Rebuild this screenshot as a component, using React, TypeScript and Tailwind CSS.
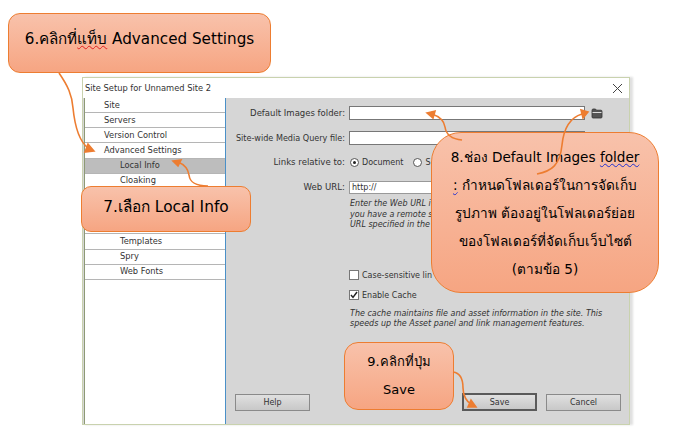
import React from "react";

const sans = "font-['Tahoma','DejaVu_Sans','Noto_Sans_Thai','Noto_Sans',sans-serif]";
const rows: [string, number][] = [
  ["Site", 1], ["Servers", 1], ["Version Control", 1], ["Advanced Settings", 1],
  ["Local Info", 2], ["Cloaking", 2], ["", 2], ["", 2],
  ["", 2], ["Templates", 2], ["Spry", 2], ["Web Fonts", 2],
];

function Callout({ className, children }: { className: string; children: React.ReactNode }) {
  return (
    <div className={"absolute flex flex-col items-center justify-center border border-[#ed7d31] bg-gradient-to-b from-[#f8c2ab] to-[#f6a582] text-black font-['DejaVu_Sans','Noto_Sans',sans-serif] " + className}>
      {children}
    </div>
  );
}

function Btn({ label, primary, className }: { label: string; primary?: boolean; className?: string }) {
  return (
    <div className={"flex w-[75px] items-center justify-center bg-gradient-to-b from-[#e0e0e0] to-[#c8c8c8] text-[8px] text-[#333] " + (primary ? "h-[18px] border-2 border-[#5a5a5a] " : "h-[17px] border border-[#8a8a8a] ") + (className ?? "")}>
      {label}
    </div>
  );
}

function Label({ children, className }: { children: React.ReactNode; className?: string }) {
  return <div className={"w-[110px] shrink-0 whitespace-nowrap text-right text-[#333] " + (className ?? "")}>{children}</div>;
}

export default function App() {
  return (
    <div className="relative h-[437px] w-[679px] overflow-hidden bg-white pl-[82px] pt-[77px]">
      <div className={"flex h-[348px] w-[548px] flex-col border border-[#c9d2ae] bg-[#d6d6d6] shadow-[3px_0_2px_#e0e0e0] text-[8.6px] leading-[11px] " + sans}>
        <div className="flex h-[20px] shrink-0 items-center justify-between bg-white pl-[2px] pr-[6px] text-[8.3px] text-[#333]">
          <span>Site Setup for Unnamed Site 2</span>
          <svg width="11" height="11" viewBox="0 0 11 11" stroke="#444" strokeWidth="1" fill="none">
            <path d="M1 1L10 10M10 1L1 10" />
          </svg>
        </div>
        <div className="flex min-h-0 flex-1">
          <div className="ml-[1px] w-[142px] shrink-0 border-x border-l-[#8d9a76] border-r-[#4a90c8] bg-white text-[8.3px]">
            {rows.map(([r, lvl], i) => (
              <div
                key={i}
                className={"flex h-[15.17px] items-center border-b border-[#b5b5b5] text-[#333] " + (lvl === 1 ? "pl-[19px] " : "pl-[35px] ") + (i === 4 ? "bg-[#bdbdbd]" : "")}
              >
                {r}
              </div>
            ))}
          </div>
          <div className="flex min-w-0 flex-1 flex-col pl-[9px]">
            <div className="mt-[8px] flex h-[14px] items-center">
              <Label className="text-[8.5px]">Default Images folder:</Label>
              <div className="ml-[4px] h-[14px] w-[236px] border border-[#777] bg-white" />
              <svg className="ml-[6px]" width="12" height="11" viewBox="0 0 12 11">
                <path d="M1 2.5Q1 1 2 1h2.5l1 1.2H10Q11 2.2 11 3.5V9Q11 10 10 10H2Q1 10 1 9z" fill="#555" stroke="#333" strokeWidth="0.8" />
                <path d="M1.5 4.5h9" stroke="#ddd" strokeWidth="1" />
              </svg>
            </div>
            <div className="mt-[11px] flex h-[14px] items-center">
              <Label className="text-[8.1px]">Site-wide Media Query file:</Label>
              <div className="ml-[4px] h-[14px] w-[236px] border border-[#777] bg-white" />
            </div>
            <div className="mt-[10px] flex h-[14px] items-center">
              <Label>Links relative to:</Label>
              <div className="ml-[5px] flex items-center text-[8px] text-[#333]">
                <span className="flex h-[9px] w-[9px] items-center justify-center rounded-full border border-[#555] bg-white">
                  <span className="h-[3px] w-[3px] rounded-full bg-[#222]" />
                </span>
                <span className="ml-[3px]">Document</span>
                <span className="ml-[10px] h-[9px] w-[9px] rounded-full border border-[#555] bg-white" />
                <span className="ml-[3px]">S</span>
              </div>
            </div>
            <div className="mt-[12px] flex h-[13px] items-center">
              <Label>Web URL:</Label>
              <div className="ml-[4px] flex h-[13px] w-[236px] items-center border border-[#999] bg-white pl-[2px] text-[8px] text-[#333]">http://</div>
            </div>
            <div className="ml-[115px] mt-[5px] text-[8px] italic leading-[10.6px] text-[#333]">
              <div className="whitespace-nowrap">Enter the Web URL i</div>
              <div className="whitespace-nowrap">you have a remote s</div>
              <div className="whitespace-nowrap">URL specified in the</div>
            </div>
            <div className="ml-[114px] mt-[39px] flex h-[11px] items-center text-[8px] text-[#333]">
              <span className="h-[10px] w-[10px] border border-[#777] bg-white" />
              <span className="ml-[3px]">Case-sensitive lin</span>
            </div>
            <div className="ml-[114px] mt-[9px] flex h-[11px] items-center text-[8px] text-[#333]">
              <span className="flex h-[10px] w-[10px] items-center justify-center border border-[#777] bg-white">
                <svg width="8" height="8" viewBox="0 0 8 8" fill="none" stroke="#222" strokeWidth="1.5"><path d="M1 4l2 2.4L7 1" /></svg>
              </span>
              <span className="ml-[3px]">Enable Cache</span>
            </div>
            <div className="ml-[115px] mt-[8px] text-[8px] italic leading-[10.6px] text-[#333]">
              <div className="whitespace-nowrap">The cache maintains file and asset information in the site. This</div>
              <div className="whitespace-nowrap">speeds up the Asset panel and link management features.</div>
            </div>
            <div className="mb-[13px] mt-auto flex items-center">
              <Btn label="Help" />
              <Btn label="Save" primary className="ml-[152px]" />
              <Btn label="Cancel" className="ml-[9px]" />
            </div>
          </div>
        </div>
      </div>

      <Callout className="left-[8px] top-[13px] h-[60px] w-[263px] rounded-[12px] pb-[7px] text-[15.2px]">
        <div>6.คลิกที่<span className="underline decoration-wavy decoration-[#e02020] decoration-1">แท็บ</span> Advanced Settings</div>
      </Callout>
      <Callout className="left-[81px] top-[186px] h-[46px] w-[170px] rounded-[10px] pb-[3px] text-[15.4px]">
        <div>7.เลือก Local Info</div>
      </Callout>
      <Callout className="left-[431px] top-[132px] h-[161px] w-[228px] rounded-[30px] text-[13.6px] leading-[28px]">
        <div>8.ช่อง Default Images <span className="underline decoration-wavy decoration-[#2030d0] decoration-1">folder </span></div>
        <div><span className="underline decoration-wavy decoration-[#2030d0] decoration-1">:</span> กำหนดโฟลเดอร์ในการจัดเก็บ</div>
        <div>รูปภาพ ต้องอยู่ในโฟลเดอร์ย่อย</div>
        <div>ของโฟลเดอร์ที่จัดเก็บเว็บไซต์</div>
        <div>(ตามข้อ 5)</div>
      </Callout>
      <Callout className="left-[344px] top-[342px] h-[68px] w-[110px] rounded-[14px] text-[13px] leading-[28px]">
        <div>9.คลิกที่ปุ่ม</div>
        <div>Save</div>
      </Callout>

      <svg className="pointer-events-none absolute left-0 top-0" width="679" height="437" fill="none" stroke="#ed7d31" strokeWidth="1.6">
        <path d="M59 73C68 86 72 95 73 108C75 128 79 141 88 148" />
        <path d="M94 151L85 152L88 144Z" fill="#ed7d31" />
        <path d="M208 186C196 186 190 183 189 175C188 168 183 164 178 162" />
        <path d="M173 161L181 160L178 166Z" fill="#ed7d31" />
        <path d="M462 140C450 139 446 134 445 127C444 120 438 116 432 114" />
        <path d="M427 113L435 111L433 118Z" fill="#ed7d31" />
        <path d="M537 174C552 171 560 165 562 145C564 125 572 117 582 114" />
        <path d="M588 112L581 110L583 118Z" fill="#ed7d31" />
        <path d="M453 372C461 373 463 380 463 388C463 396 467 402 471 404" />
        <path d="M476 407L468 407L471 400Z" fill="#ed7d31" />
      </svg>
    </div>
  );
}
